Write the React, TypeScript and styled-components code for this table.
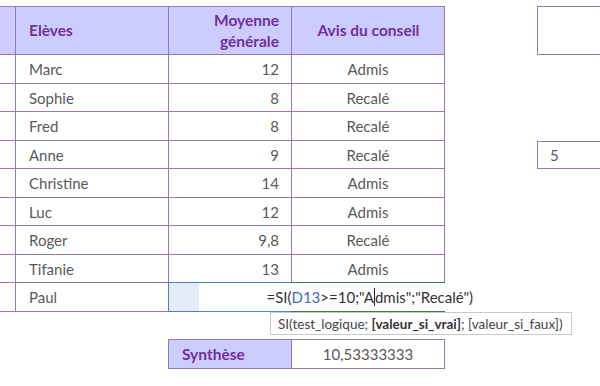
import styled, { createGlobalStyle } from 'styled-components';

const GlobalStyle = createGlobalStyle`
  html, body {
    margin: 0;
    padding: 0;
    background: #ffffff;
  }
  body {
    font-family: Lato, 'Open Sans', sans-serif;
  }
`;

const line = '#9479b4';
const head = '#ccccff';

const Sheet = styled.div`
  display: flex;
  flex-direction: column;
  padding-top: 6px;
  width: 600px;
  overflow: hidden;
`;

const Row = styled.div<{ $h: number }>`
  display: grid;
  grid-template-columns: 16px 153px 123px 153px 92px 1fr;
  height: ${(p) => p.$h}px;
  font-size: 15px;
  color: #595959;
`;

const Cell = styled.div`
  box-sizing: border-box;
  display: flex;
  align-items: center;
  border-right: 1px solid ${line};
  border-bottom: 1px solid ${line};
  position: relative;
`;

const Gutter = styled(Cell)<{ $head?: boolean }>`
  background: ${(p) => (p.$head ? head : '#ffffff')};
  border-top: ${(p) => (p.$head ? `1px solid ${line}` : 'none')};
`;

const HeadCell = styled(Cell)<{ $align: 'left' | 'right' | 'center' }>`
  background: ${head};
  border-top: 1px solid ${line};
  color: #7030a0;
  font-weight: 700;
  font-size: 15.5px;
  line-height: 21px;
  justify-content: ${(p) =>
    p.$align === 'left' ? 'flex-start' : p.$align === 'right' ? 'flex-end' : 'center'};
  text-align: ${(p) => p.$align};
  padding: 0 12px 0 13px;
`;

const NameCell = styled(Cell)`
  padding-left: 13px;
`;

const GradeCell = styled(Cell)<{ $ref?: boolean }>`
  justify-content: flex-end;
  padding-right: 12px;
  background: ${(p) => (p.$ref ? '#e4ecf8' : '#ffffff')};
  &::after {
    content: '';
    display: ${(p) => (p.$ref ? 'block' : 'none')};
    position: absolute;
    left: -1px;
    top: -1px;
    right: -1px;
    bottom: -1px;
    border: 1px solid #4f7fc8;
    border-right: none;
    z-index: 3;
  }
`;

const VerdictCell = styled(Cell)<{ $active?: boolean }>`
  justify-content: center;
  &::after {
    content: '';
    display: ${(p) => (p.$active ? 'block' : 'none')};
    position: absolute;
    left: -1px;
    top: -1px;
    right: -1px;
    bottom: -1px;
    border-top: 1px solid #3f7a4f;
    border-bottom: 1px solid #3f7a4f;
    z-index: 3;
  }
`;

const Blank = styled.div``;

const SideCell = styled.div<{ $top?: boolean }>`
  box-sizing: border-box;
  display: flex;
  align-items: center;
  padding-left: 12px;
  border-left: 1px solid ${line};
  border-bottom: 1px solid ${line};
  border-top: ${(p) => (p.$top ? `1px solid ${line}` : 'none')};
`;

const Editor = styled.div`
  position: absolute;
  left: -93px;
  right: -36px;
  top: 0;
  bottom: 0;
  background: #ffffff;
  display: flex;
  align-items: center;
  justify-content: flex-end;
  padding-right: 7px;
  color: #333333;
  white-space: nowrap;
  z-index: 2;
`;

const RefText = styled.span`
  color: #3a6fc4;
`;

const Caret = styled.span`
  display: inline-block;
  width: 1px;
  height: 18px;
  background: #222222;
  vertical-align: -4px;
`;

const Tooltip = styled.div`
  position: absolute;
  left: -22px;
  top: calc(100% + 1px);
  width: 302px;
  height: 23px;
  box-sizing: border-box;
  border: 1px solid #c9c9c9;
  background: #ffffff;
  display: flex;
  align-items: center;
  padding-left: 7px;
  font-size: 13.5px;
  color: #444444;
  white-space: nowrap;
  z-index: 4;
  b {
    color: #333333;
  }
`;

const SummaryLabel = styled.div`
  box-sizing: border-box;
  margin-left: -1px;
  border: 1px solid ${line};
  background: ${head};
  color: #7030a0;
  font-weight: 700;
  font-size: 15.5px;
  display: flex;
  align-items: center;
  padding-left: 13px;
`;

const SummaryValue = styled.div`
  box-sizing: border-box;
  border: 1px solid ${line};
  border-left: none;
  display: flex;
  align-items: center;
  justify-content: center;
`;

const students = [
  { name: 'Marc', grade: '12', verdict: 'Admis' },
  { name: 'Sophie', grade: '8', verdict: 'Recalé' },
  { name: 'Fred', grade: '8', verdict: 'Recalé' },
  { name: 'Anne', grade: '9', verdict: 'Recalé', side: '5' },
  { name: 'Christine', grade: '14', verdict: 'Admis' },
  { name: 'Luc', grade: '12', verdict: 'Admis' },
  { name: 'Roger', grade: '9,8', verdict: 'Recalé' },
  { name: 'Tifanie', grade: '13', verdict: 'Admis' },
];

const App = () => {
  return (
    <Sheet>
      <GlobalStyle />
      <Row $h={49}>
        <Gutter $head />
        <HeadCell $align="left">Elèves</HeadCell>
        <HeadCell $align="right">
          Moyenne
          <br />
          générale
        </HeadCell>
        <HeadCell $align="center">Avis du conseil</HeadCell>
        <Blank />
        <SideCell $top />
      </Row>
      {students.map((s, i) => (
        <Row key={s.name} $h={i % 2 === 0 ? 29 : 28}>
          <Gutter />
          <NameCell>{s.name}</NameCell>
          <GradeCell>{s.grade}</GradeCell>
          <VerdictCell>{s.verdict}</VerdictCell>
          <Blank />
          {s.side ? <SideCell $top>{s.side}</SideCell> : <Blank />}
        </Row>
      ))}
      <Row $h={29}>
        <Gutter />
        <NameCell>Paul</NameCell>
        <GradeCell $ref />
        <VerdictCell $active>
          <Editor>
            =SI(<RefText>D13</RefText>&gt;=10;"A<Caret />dmis";"Recalé")
          </Editor>
          <Tooltip>
            SI(test_logique;&nbsp;<b>[valeur_si_vrai]</b>; [valeur_si_faux])
          </Tooltip>
        </VerdictCell>
        <Blank />
        <Blank />
      </Row>
      <Row $h={27} />
      <Row $h={30}>
        <Blank />
        <Blank />
        <SummaryLabel>Synthèse</SummaryLabel>
        <SummaryValue>10,53333333</SummaryValue>
      </Row>
    </Sheet>
  );
};

export default App;
